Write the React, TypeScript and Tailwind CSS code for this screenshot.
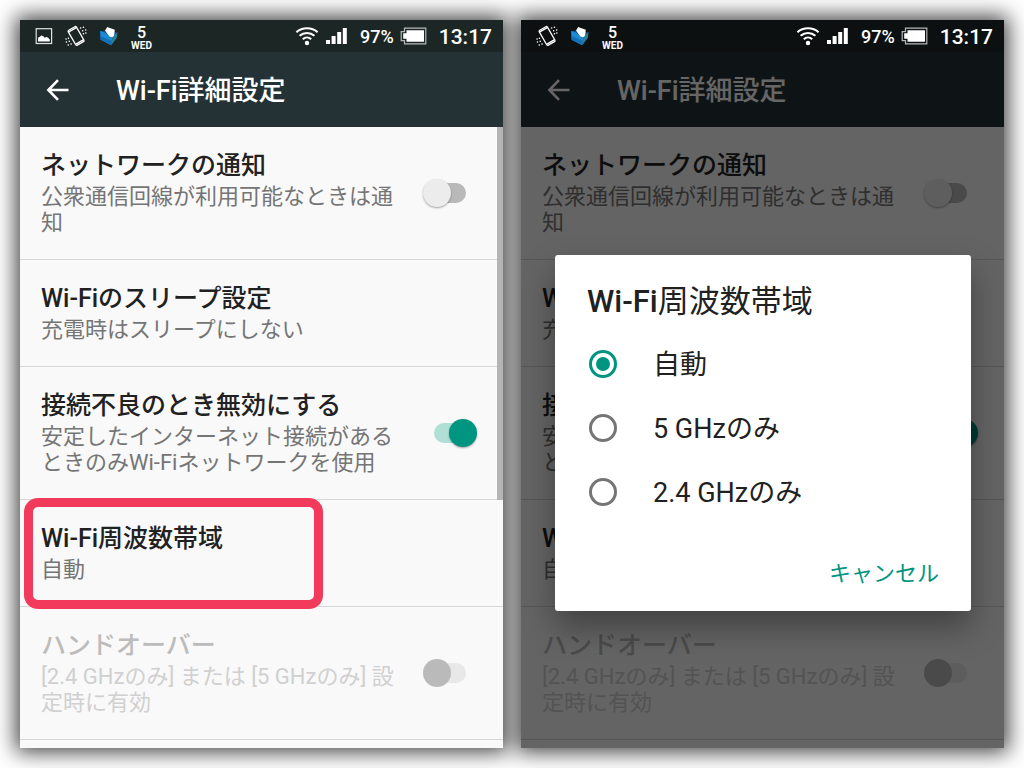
import { useState } from 'react';
import clsx from 'clsx';

type Setting = {
  id: string;
  title: string;
  summary: string;
  toggle?: boolean;
  disabled?: boolean;
  highlight?: boolean;
};

const settings: Setting[] = [
  { id: 'notify', title: 'ネットワークの通知', summary: '公衆通信回線が利用可能なときは通知', toggle: false },
  { id: 'sleep', title: 'Wi-Fiのスリープ設定', summary: '充電時はスリープにしない' },
  {
    id: 'poor',
    title: '接続不良のとき無効にする',
    summary: '安定したインターネット接続があるときのみWi-Fiネットワークを使用',
    toggle: true,
  },
  { id: 'band', title: 'Wi-Fi周波数帯域', summary: '自動', highlight: true },
  {
    id: 'handover',
    title: 'ハンドオーバー',
    summary: '[2.4 GHzのみ] または [5 GHzのみ] 設定時に有効',
    toggle: false,
    disabled: true,
  },
];

const bands = ['自動', '5 GHzのみ', '2.4 GHzのみ'];

function ImageIcon() {
  return (
    <svg width="18" height="18" viewBox="0 0 18 18" fill="none">
      <rect x="1.2" y="1.7" width="15.4" height="14.8" stroke="#dfe3e2" strokeWidth="1.2" />
      <path d="M3 14.4v-3.6l1.8-1 1.6-1.2 2 .6 1.2 1.6 1.6-.8 1.6.4 2 2v2z" fill="#fff" />
    </svg>
  );
}

function VibrateIcon() {
  return (
    <svg width="22" height="22" viewBox="0 0 22 22" fill="none">
      <g transform="rotate(-30 11 11)">
        <rect x="6.4" y="2.4" width="9.4" height="17.2" rx="1.2" stroke="#fff" strokeWidth="1.3" />
        <path d="M6.8 3.9h8.6M6.8 18h8.6" stroke="#fff" strokeWidth="1.5" />
      </g>
      <path
        d="M15.6 3h.1M18.4 2.2h.1M17.6 5.8h.1M20.6 5h.1M18.4 8.8h.1M20.8 8h.1M3.4 13.2h.1M1 14h.1M4.2 16.2h.1M1.4 17h.1M6 19h.1M3.2 20h.1"
        stroke="#fff"
        strokeWidth="1.5"
        strokeLinecap="round"
      />
    </svg>
  );
}

function FolderIcon() {
  return (
    <svg width="20" height="20" viewBox="0 0 20 20">
      <path d="M1 5.4l4.4-1 13 2-5.4 12z" fill="#0a4f86" />
      <path d="M6 4.4L8.2 1l7.6 2.8-.8 7.4-4 .6z" fill="#fff" />
      <path d="M1 5l4.6 1.2 4.8 4.2 3 .8-1.2 8L1.6 13.8z" fill="#1c8ad6" />
      <path d="M1.4 10l11.4 5-.6 4.2L1.6 13.8z" fill="#1470b4" />
      <path d="M13.4 11.2L18.6 6l-.8 6-5.6 7.2z" fill="#2f7d92" />
    </svg>
  );
}

function WifiIcon() {
  return (
    <svg width="24" height="20" viewBox="0 0 24 20" fill="none" stroke="#fff" strokeWidth="2.1">
      <path d="M1.4 6.2c6-5.2 15.2-5.2 21.2 0" />
      <path d="M4.6 9.8c4.2-3.8 10.6-3.8 14.8 0" />
      <path d="M7.8 13.2c2.4-2.2 6-2.2 8.4 0" />
      <circle cx="12" cy="17" r="2.2" fill="#fff" stroke="none" />
    </svg>
  );
}

function SignalIcon() {
  return (
    <svg width="21" height="18" viewBox="0 0 21 18" fill="#fff">
      <rect x="0" y="13" width="4" height="4" />
      <rect x="5.6" y="9" width="4" height="8" />
      <rect x="11.2" y="5" width="4" height="12" />
      <rect x="16.8" y="1" width="4" height="16" />
    </svg>
  );
}

function BatteryIcon() {
  return (
    <svg width="27" height="18" viewBox="0 0 27 18">
      <path d="M4.5 1.2h21.3v15.6H4.5v-3.2H1.2V4.6h3.3z" fill="none" stroke="#b4b9b8" strokeWidth="1.2" />
      <path d="M6.5 3.2h17.5v11.6H6.5v-3H3.2V6.2h3.3z" fill="#fff" />
    </svg>
  );
}

function BackIcon() {
  return (
    <svg width="24" height="24" viewBox="0 0 24 24" fill="none" stroke="#fff" strokeWidth="2.6">
      <path d="M22.5 12H3M12 2.2L2.4 12l9.6 9.8" />
    </svg>
  );
}

function StatusBar({ screenshot, dimmed }: { screenshot?: boolean; dimmed?: boolean }) {
  return (
    <div
      className={clsx(
        'flex h-8 items-center justify-between pl-[15px] pr-[11px] font-medium text-white',
        dimmed ? 'bg-[#0c1010]' : 'bg-[#1c2625]'
      )}
    >
      <div className="flex items-center gap-3">
        {screenshot && <ImageIcon />}
        <VibrateIcon />
        <FolderIcon />
        <div className="flex flex-col items-center pt-1">
          <span className="text-base leading-4">5</span>
          <span className="text-[10px] leading-[10px] font-bold">WED</span>
        </div>
      </div>
      <div className="flex items-center">
        <WifiIcon />
        <span className="ml-[7px]">
          <SignalIcon />
        </span>
        <span className="ml-[13px] pt-0.5 text-lg leading-8">97%</span>
        <span className="ml-[6px]">
          <BatteryIcon />
        </span>
        <span className="ml-3 pt-0.5 text-[21px] leading-8">13:17</span>
      </div>
    </div>
  );
}

function AppBar() {
  return (
    <header className="flex h-[75px] items-center bg-[#243236] pl-[26px] text-white">
      <button type="button" aria-label="戻る">
        <BackIcon />
      </button>
      <h1 className="ml-[46px] pt-1 text-[27px] font-medium">Wi-Fi詳細設定</h1>
    </header>
  );
}

function Switch({ id, initial, disabled }: { id: string; initial: boolean; disabled?: boolean }) {
  const [on, setOn] = useState(initial);

  return (
    <input
      id={id}
      type="checkbox"
      role="switch"
      checked={on}
      disabled={disabled}
      onChange={() => setOn(!on)}
      className="relative h-7 w-[54px] shrink-0 appearance-none before:absolute before:inset-x-[11px] before:inset-y-1 before:rounded-full before:bg-[#b9b9b9] after:absolute after:left-0 after:top-0 after:size-7 after:rounded-full after:bg-[#ececec] after:shadow-[0_1px_2px_rgba(0,0,0,0.35)] checked:before:bg-[#b0dfd6] checked:after:left-[26px] checked:after:bg-[#009580] disabled:before:bg-[#e8e8e8] disabled:after:bg-[#bababa] disabled:after:shadow-none"
    />
  );
}

function SettingRow({ item, prefix, marked }: { item: Setting; prefix: string; marked?: boolean }) {
  const id = `${prefix}-${item.id}`;

  return (
    <li className="relative flex items-center gap-4 border-b border-[#d6d6d6] py-[23px] pl-[21px] pr-[26px]">
      <label htmlFor={item.toggle !== undefined ? id : undefined} className="flex-1">
        <span
          className={clsx(
            'block text-[25px] leading-8 font-medium',
            item.disabled ? 'text-[#bcbcbc]' : 'text-[#212121]'
          )}
        >
          {item.title}
        </span>
        <span
          className={clsx(
            'mt-0.5 block text-[22px] leading-[26px]',
            item.disabled ? 'text-[#d0d0d0]' : 'text-[#757575]'
          )}
        >
          {item.summary}
        </span>
      </label>
      {item.toggle !== undefined && <Switch id={id} initial={item.toggle} disabled={item.disabled} />}
      {marked && (
        <div className="absolute -bottom-[3px] -top-0.5 left-1 right-[180px] rounded-[14px] border-[9px] border-[#f23a5c]" />
      )}
    </li>
  );
}

function SettingsList({ prefix, marked }: { prefix: string; marked?: boolean }) {
  return (
    <div className="relative bg-[#f9f9f9] pb-2">
      <ul>
        {settings.map((item) => (
          <SettingRow key={item.id} item={item} prefix={prefix} marked={marked && item.highlight} />
        ))}
      </ul>
      {marked && <div className="absolute right-0 top-0 h-[373px] w-[6px] bg-[#b4b4b4]" />}
    </div>
  );
}

function BandDialog() {
  const [band, setBand] = useState(bands[0]);

  return (
    <div
      role="dialog"
      aria-labelledby="band-title"
      className="absolute left-[34px] right-[33px] top-[203px] rounded-[3px] bg-white px-8 pb-[14px] pt-[25px] shadow-[0_16px_32px_rgba(0,0,0,0.35)]"
    >
      <h2 id="band-title" className="text-[31px] leading-[44px] font-normal text-[#212121]">
        <span className="font-medium">Wi-Fi</span>周波数帯域
      </h2>
      <div className="mt-2 pl-0.5">
        {bands.map((name) => (
          <label key={name} className="flex h-16 items-center gap-9 text-[27px] text-[#212121]">
            <input
              type="radio"
              name="band"
              checked={band === name}
              onChange={() => setBand(name)}
              className="relative size-7 appearance-none rounded-full border-[3px] border-[#757575] checked:border-[#009580] checked:after:absolute checked:after:inset-1 checked:after:rounded-full checked:after:bg-[#009580]"
            />
            <span className="pt-0.5">{name}</span>
          </label>
        ))}
      </div>
      <div className="mt-[25px] flex justify-end">
        <button type="button" className="h-12 text-[22px] text-[#009580]">
          キャンセル
        </button>
      </div>
    </div>
  );
}

export default function App() {
  return (
    <main className="grid min-h-screen grid-cols-2 items-start gap-[18px] bg-white p-5 font-[Roboto,'Noto_Sans_CJK_JP',sans-serif]">
      <section className="shadow-[0_0_20px_4px_rgba(0,0,0,0.75)]">
        <div className="relative z-10">
          <StatusBar screenshot />
          <AppBar />
          <SettingsList prefix="left" marked />
        </div>
      </section>
      <section className="shadow-[0_0_20px_4px_rgba(0,0,0,0.75)]">
        <div className="relative z-10">
          <StatusBar dimmed />
          <div className="relative">
            <AppBar />
            <SettingsList prefix="right" />
            <div className="absolute inset-0 bg-black/60" />
            <BandDialog />
          </div>
        </div>
      </section>
    </main>
  );
}
